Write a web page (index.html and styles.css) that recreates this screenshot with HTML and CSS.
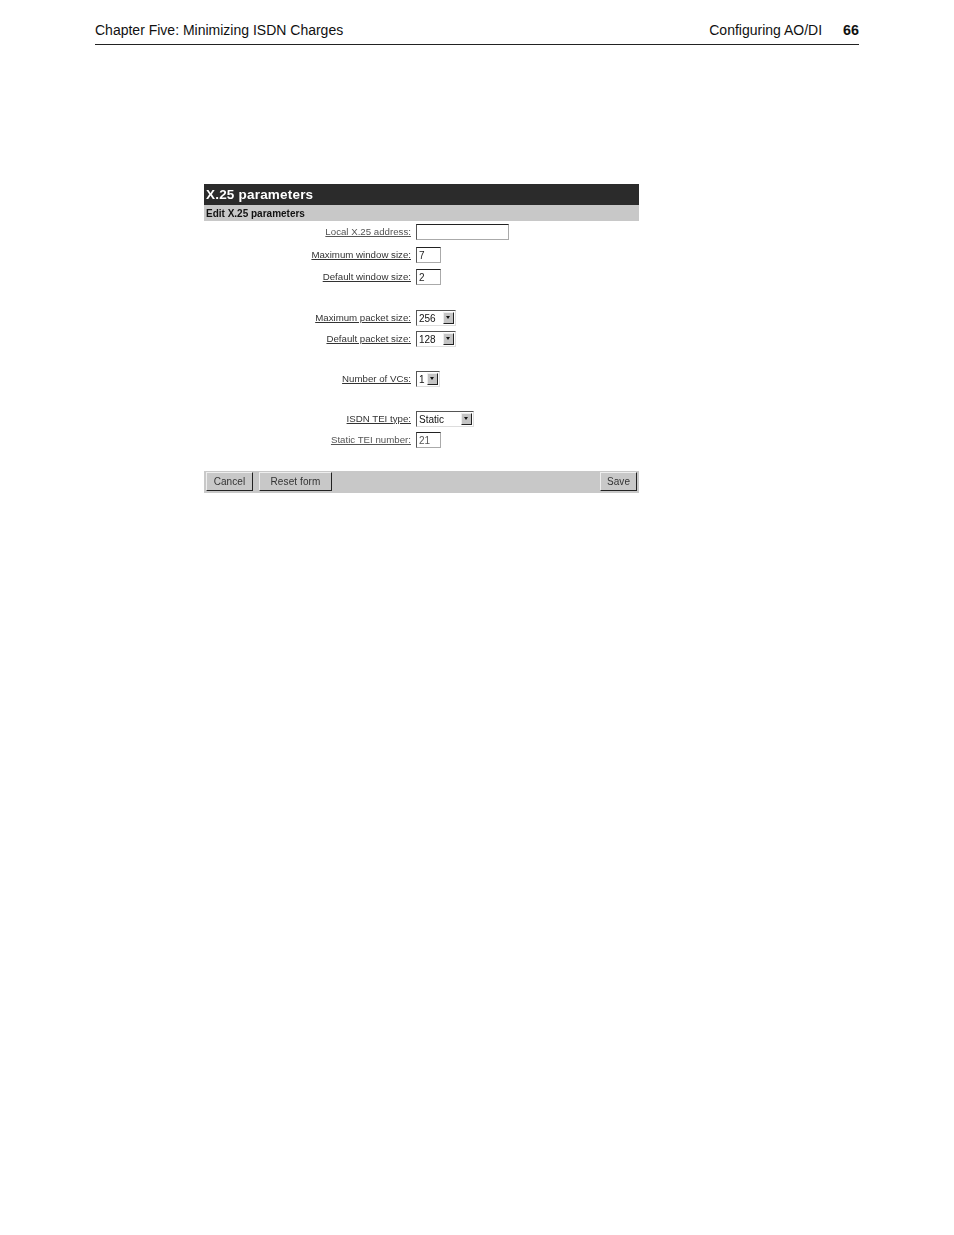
FILE: index.html
```html
<!DOCTYPE html>
<html>
<head>
    <meta charset="UTF-8">
    <meta name="viewport" content="width=device-width, initial-scale=1.0">
    <title>X.25 parameters</title>
    <link rel="stylesheet" href="styles.css">
</head>
<body>
    <div class="page-header">
        <span class="chapter">Chapter Five: Minimizing ISDN Charges</span>
        <span class="section">Configuring AO/DI</span>
        <span class="page-number">66</span>
    </div>

    <div class="panel">
        <div class="title-bar">X.25 parameters</div>
        <div class="sub-bar">Edit X.25 parameters</div>

        <div class="form-body">
            <div class="row">
                <span class="label label-light">Local X.25 address:</span>
                <input class="field field-wide" type="text" value="">
            </div>
            <div class="row row-next">
                <span class="label">Maximum window size:</span>
                <input class="field" type="text" value="7">
            </div>
            <div class="row row-near">
                <span class="label">Default window size:</span>
                <input class="field" type="text" value="2">
            </div>

            <div class="row row-group-first">
                <span class="label">Maximum packet size:</span>
                <div class="select select-packet"><span class="select-value">256</span><span class="select-arrow"></span></div>
            </div>
            <div class="row row-tight">
                <span class="label">Default packet size:</span>
                <div class="select select-packet"><span class="select-value">128</span><span class="select-arrow"></span></div>
            </div>

            <div class="row row-group">
                <span class="label">Number of VCs:</span>
                <div class="select select-vc"><span class="select-value">1</span><span class="select-arrow"></span></div>
            </div>

            <div class="row row-group">
                <span class="label">ISDN TEI type:</span>
                <div class="select select-tei"><span class="select-value">Static</span><span class="select-arrow"></span></div>
            </div>
            <div class="row row-tight">
                <span class="label label-light">Static TEI number:</span>
                <input class="field field-light" type="text" value="21">
            </div>
        </div>

        <div class="button-bar">
            <button class="btn btn-cancel" type="button">Cancel</button>
            <button class="btn btn-reset" type="button">Reset form</button>
            <button class="btn btn-save" type="button">Save</button>
        </div>
    </div>
</body>
</html>
```

FILE: styles.css
```css
body {
    margin: 0;
    padding: 0 95px;
    background-color: #fff;
    color: #111;
    font-family: "Liberation Sans", Arial, sans-serif;
}

/* Running head of the manual page */
.page-header {
    display: flex;
    align-items: baseline;
    height: 45px;
    box-sizing: border-box;
    padding-top: 22px;
    border-bottom: 1px solid #222;
    font-size: 14px;
    line-height: 17px;
}

.chapter {
    flex: 1;
}

.page-number {
    margin-left: 21px;
    font-size: 14.3px;
    font-weight: bold;
}

/* Screenshot of the admin form */
.panel {
    width: 435px;
    margin: 139px 0 0 109px;
    filter: blur(0.35px);
}

.title-bar {
    height: 21px;
    padding-left: 2px;
    background-color: #2b2b2b;
    color: #fff;
    font-size: 13.5px;
    font-weight: bold;
    line-height: 21px;
    letter-spacing: 0.2px;
}

.sub-bar {
    height: 16px;
    padding: 1px 0 0 2px;
    box-sizing: border-box;
    background-color: #c8c8c8;
    color: #111;
    font-size: 10px;
    font-weight: bold;
    line-height: 16px;
}

.form-body {
    padding-top: 3px;
}

.row {
    display: flex;
    align-items: center;
    height: 16px;
}

.row-next {
    margin-top: 7px;
}

.row-near {
    margin-top: 6px;
}

.row-tight {
    margin-top: 5px;
}

.row-group {
    margin-top: 24px;
}

.row-group-first {
    margin-top: 25px;
}

.label {
    width: 207px;
    margin-right: 5px;
    padding-bottom: 2px;
    color: #333;
    font-size: 9.7px;
    text-align: right;
    text-decoration: underline;
}

.label-light {
    color: #555;
}

.field {
    width: 25px;
    height: 16px;
    box-sizing: border-box;
    margin: 0;
    padding: 0 2px;
    border-style: solid;
    border-width: 1px;
    border-color: #222 #aaa #aaa #555;
    border-radius: 0;
    outline: none;
    background-color: #fff;
    color: #222;
    font-family: inherit;
    font-size: 10px;
}

.field-wide {
    width: 93px;
}

.field-light {
    color: #555;
}

.select {
    display: flex;
    align-items: center;
    justify-content: space-between;
    height: 16px;
    box-sizing: border-box;
    padding: 1px 1px 1px 2px;
    border-style: solid;
    border-width: 1px;
    border-color: #555 #ddd #ddd #555;
    background-color: #fff;
    font-size: 10px;
}

.select-packet {
    width: 40px;
}

.select-vc {
    width: 24px;
}

.select-tei {
    width: 58px;
}

.select-arrow {
    position: relative;
    width: 11px;
    height: 12px;
    box-sizing: border-box;
    border-style: solid;
    border-width: 1px;
    border-color: #eee #222 #222 #eee;
    background-color: #c4c4c4;
}

.select-arrow:before {
    position: absolute;
    content: "";
    top: 3px;
    left: 2px;
    border-style: solid;
    border-width: 3px 2.5px 0;
    border-color: #111 transparent transparent;
}

.button-bar {
    display: flex;
    align-items: flex-start;
    height: 22px;
    box-sizing: border-box;
    margin-top: 23px;
    padding: 1px 2px 0;
    background-color: #c8c8c8;
}

.btn {
    height: 19px;
    box-sizing: border-box;
    margin: 0;
    padding: 0;
    border-style: solid;
    border-width: 1px;
    border-color: #eee #222 #222 #eee;
    border-radius: 0;
    background-color: #c8c8c8;
    color: #333;
    font-family: inherit;
    font-size: 10px;
    letter-spacing: 0.1px;
}

.btn-cancel {
    width: 47px;
}

.btn-reset {
    width: 73px;
    margin-left: 6px;
}

.btn-save {
    width: 37px;
    margin-left: auto;
}
```
